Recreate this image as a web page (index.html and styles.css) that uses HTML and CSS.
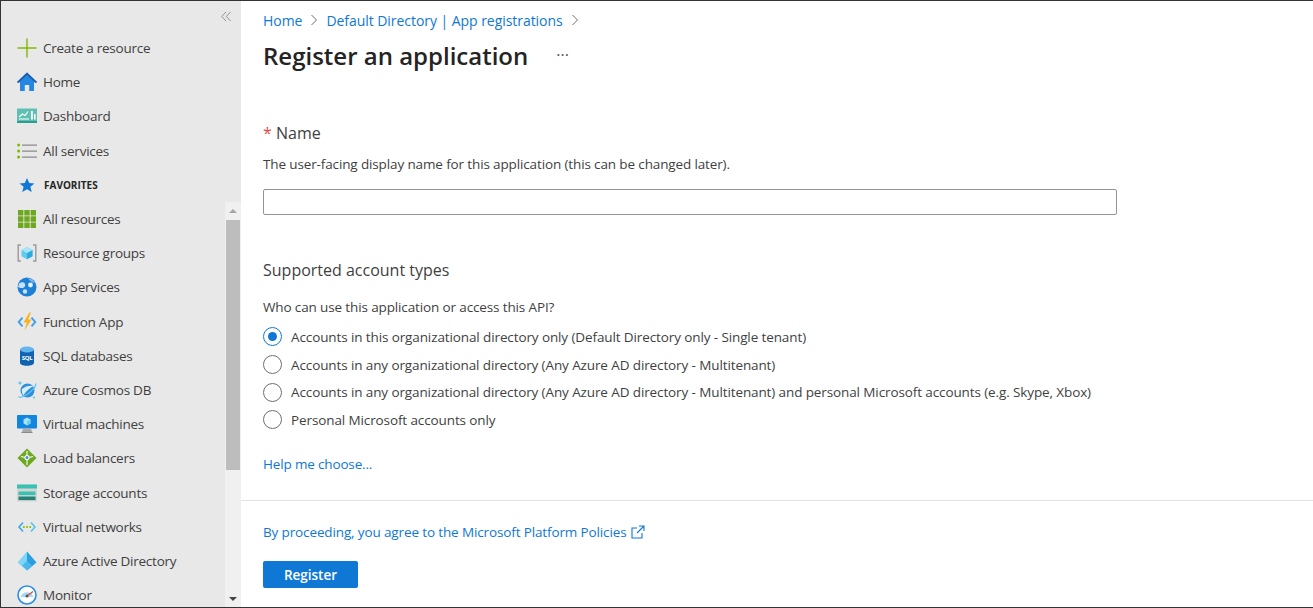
FILE: index.html
```html
<!DOCTYPE html>
<html lang="en">
<head>
<meta charset="UTF-8" />
<meta name="viewport" content="width=device-width, initial-scale=1" />
<title>Register an application</title>
<link rel="stylesheet" href="styles.css">
</head>
<body>
<div class="window">

  <!-- Sidebar -->
  <aside class="sidebar">
    <div class="collapse">
      <svg width="11" height="11" viewBox="0 0 12 12" fill="none" stroke="#8a8a8a" stroke-width="1"><path d="M5.5 1 L0.8 6 L5.5 11 M10.5 1 L5.8 6 L10.5 11"/></svg>
    </div>

    <a class="nav-item">
      <svg class="icon" viewBox="0 0 20 20" fill="none"><path d="M10 0.5V19.5M0.5 10H19.5" stroke="#7fba00" stroke-width="1.4"/></svg>
      <span>Create a resource</span>
    </a>
    <a class="nav-item">
      <svg class="icon" viewBox="0 0 20 20"><path d="M10 0.5 L20 10 L18.6 11 L17 9.8 V19 H12.2 V13 H7.8 V19 H3 V9.8 L1.4 11 L0 10 Z" fill="#2487e2"/><path d="M10 0.5 L20 10 L18.6 11 L10 3 L1.4 11 L0 10 Z" fill="#1d5fa8"/></svg>
      <span>Home</span>
    </a>
    <a class="nav-item">
      <svg class="icon" viewBox="0 0 20 20"><rect y="2.5" width="20" height="14" fill="#5fbfb2"/><rect y="15" width="20" height="2" fill="#2f9c92"/><path d="M2 11 L5.5 8 L8 9.5 L11 5.5" fill="none" stroke="#fff" stroke-width="1.2"/><path d="M14 5h1.8v8.5H14zM17 8h1.6v5.5H17z" fill="#fff"/><rect x="2" y="12.5" width="10" height="1" fill="#fff"/></svg>
      <span>Dashboard</span>
    </a>
    <a class="nav-item">
      <svg class="icon" viewBox="0 0 20 20"><path d="M5 3.4h15v1.3H5zM5 9.4h15v1.3H5zM5 15.4h15v1.3H5z" fill="#8a8a8a"/><circle cx="1.6" cy="4" r="1.5" fill="#7fba00"/><circle cx="1.6" cy="10" r="1.5" fill="#7fba00"/><circle cx="1.6" cy="16" r="1.5" fill="#7fba00"/></svg>
      <span>All services</span>
    </a>
    <div class="nav-item favorites">
      <svg class="icon" viewBox="0 0 20 20"><path d="M10 3 L12.2 8 L17.4 8.4 L13.4 11.8 L14.7 17 L10 14.2 L5.3 17 L6.6 11.8 L2.6 8.4 L7.8 8 Z" fill="#0f78d4"/></svg>
      <span>FAVORITES</span>
    </div>

    <div class="scroll-area">
      <nav class="scroll-list">
        <a class="nav-item">
          <svg class="icon" viewBox="0 0 20 20" fill="#6da81e"><path d="M1 1h5.4v5.4H1zM7.3 1h5.4v5.4H7.3zM13.6 1H19v5.4h-5.4zM1 7.3h5.4v5.4H1zM7.3 7.3h5.4v5.4H7.3zM13.6 7.3H19v5.4h-5.4zM1 13.6h5.4V19H1zM7.3 13.6h5.4V19H7.3zM13.6 13.6H19V19h-5.4z"/></svg>
          <span>All resources</span>
        </a>
        <a class="nav-item">
          <svg class="icon" viewBox="0 0 20 20"><path d="M4 2H1.2V18H4" fill="none" stroke="#9a9a9a" stroke-width="1.4"/><path d="M16 2h2.8V18H16" fill="none" stroke="#9a9a9a" stroke-width="1.4"/><path d="M10 4 L15.5 7 V13.2 L10 16.2 L4.5 13.2 V7 Z" fill="#5ecbf2"/><path d="M10 10 L15.5 7 V13.2 L10 16.2 Z" fill="#2ea9dc"/><path d="M10 4 L15.5 7 L10 10 L4.5 7 Z" fill="#a6e6fa"/></svg>
          <span>Resource groups</span>
        </a>
        <a class="nav-item">
          <svg class="icon" viewBox="0 0 20 20"><circle cx="10" cy="10" r="9.5" fill="#1f7fd6"/><path d="M2.5 6 C6 4 9 6 8 9 C7 12 3 11 1 10 Z" fill="#c4e2f8"/><circle cx="13.5" cy="8" r="2.4" fill="#e8f4fc"/><circle cx="8" cy="14.5" r="2.2" fill="#c4e2f8"/><path d="M11 1 C14 1.5 17 3.5 18 6 C15.5 5.5 12.5 4 11 1 Z" fill="#7cbcec"/></svg>
          <span>App Services</span>
        </a>
        <a class="nav-item">
          <svg class="icon" viewBox="0 0 20 20"><path d="M4.8 5 L0.5 10 L4.8 15 L6.2 13.8 L3 10 L6.2 6.2 Z" fill="#3aa0e8"/><path d="M15.2 5 L19.5 10 L15.2 15 L13.8 13.8 L17 10 L13.8 6.2 Z" fill="#3aa0e8"/><path d="M12.5 0.5 L6.5 10.5 H9.8 L7.5 18.5 L14.5 7.5 H11 L14 0.5 Z" fill="#f8b21c"/></svg>
          <span>Function App</span>
        </a>
        <a class="nav-item">
          <svg class="icon" viewBox="0 0 20 20"><path d="M3 3.5 H17 V16.5 C17 18.6 14 19.8 10 19.8 C6 19.8 3 18.6 3 16.5 Z" fill="#0f63b0"/><ellipse cx="10" cy="3.5" rx="7" ry="3" fill="#63b5ee"/><text x="10" y="13.6" class="sql-text">SQL</text></svg>
          <span>SQL databases</span>
        </a>
        <a class="nav-item">
          <svg class="icon" viewBox="0 0 20 20"><circle cx="10.5" cy="10.5" r="7" fill="#2f8fdc"/><path d="M5 9 C8 6 14 5 17 6 C14 7 9 11 6.5 15.5 C5 13.5 4.5 11 5 9 Z" fill="#d7eefc"/><path d="M18.5 3.5 C20 6 14 12 9 15 C6 16.8 2.5 18 1.5 16.5" fill="none" stroke="#5ec4f2" stroke-width="1.3"/><path d="M3 0.5 L3.7 2.3 L5.5 3 L3.7 3.7 L3 5.5 L2.3 3.7 L0.5 3 L2.3 2.3 Z" fill="#5ec4f2"/><circle cx="17" cy="17.5" r="1.1" fill="#5ec4f2"/></svg>
          <span>Azure Cosmos DB</span>
        </a>
        <a class="nav-item">
          <svg class="icon" viewBox="0 0 20 20"><rect y="1" width="20" height="13.5" rx="0.8" fill="#1185e0"/><path d="M6 14.5h8l1 3.5H5z" fill="#a9a9a9"/><path d="M4.5 18h11v1h-11z" fill="#8a8a8a"/><path d="M10 3.5 L13.5 5.5 V9.5 L10 11.5 L6.5 9.5 V5.5 Z" fill="#a6e2fa"/><path d="M10 7.5 L13.5 5.5 V9.5 L10 11.5 Z" fill="#6ccdf2"/></svg>
          <span>Virtual machines</span>
        </a>
        <a class="nav-item">
          <svg class="icon" viewBox="0 0 20 20"><path d="M10 0.5 L19.5 10 L10 19.5 L0.5 10 Z" fill="#6da81e"/><path d="M10 3V17M4 8.5L10 10L16 8.5" stroke="#fff" stroke-width="1.1" fill="none"/><circle cx="10" cy="9.5" r="2.6" fill="#fff"/><circle cx="10" cy="9.5" r="1.5" fill="#3f8fdc"/></svg>
          <span>Load balancers</span>
        </a>
        <a class="nav-item">
          <svg class="icon" viewBox="0 0 20 20"><rect y="1.5" width="20" height="17" fill="#d4d4d4"/><rect y="1.5" width="20" height="4" fill="#37c2b1"/><rect x="1.5" y="8.5" width="17" height="3.6" fill="#37c2b1"/><rect x="1.5" y="13.5" width="17" height="3.6" fill="#258277"/></svg>
          <span>Storage accounts</span>
        </a>
        <a class="nav-item">
          <svg class="icon" viewBox="0 0 20 20"><path d="M5.5 5 L1 10 L5.5 15 L6.6 14 L3 10 L6.6 6 Z" fill="#32a6ea"/><path d="M14.5 5 L19 10 L14.5 15 L13.4 14 L17 10 L13.4 6 Z" fill="#4cc4f0"/><circle cx="6.8" cy="10" r="1" fill="#7fba00"/><circle cx="10" cy="10" r="1" fill="#7fba00"/><circle cx="13.2" cy="10" r="1" fill="#7fba00"/></svg>
          <span>Virtual networks</span>
        </a>
        <a class="nav-item">
          <svg class="icon" viewBox="0 0 20 20"><path d="M10 0.5 L19.5 11.5 L10 19.5 Z" fill="#2a9fe0"/><path d="M10 0.5 L0.5 11.5 L10 19.5 Z" fill="#7fd4f7"/><path d="M10 10 L15 14.5 L10 19.5 L5 14.5 Z" fill="#4bb8ec"/></svg>
          <span>Azure Active Directory</span>
        </a>
        <a class="nav-item">
          <svg class="icon" viewBox="0 0 20 20"><circle cx="10" cy="10" r="9" fill="#fff" stroke="#2a8fe0" stroke-width="1.6"/><path d="M3.5 12 A6.8 6.8 0 0 1 16.5 12 Z" fill="#a8d8f6"/><path d="M10 11 L16 6.5" stroke="#d94f3d" stroke-width="1.4"/><circle cx="10" cy="11" r="1.5" fill="#555"/></svg>
          <span>Monitor</span>
        </a>
      </nav>
      <div class="scrollbar">
        <div class="arrow arrow-top"><i class="tri tri-up"></i></div>
        <div class="thumb"></div>
        <div class="rest"></div>
        <div class="arrow"><i class="tri tri-down"></i></div>
      </div>
    </div>
  </aside>

  <!-- Main -->
  <main class="main">
    <div class="breadcrumb">
      <a>Home</a>
      <svg class="chev" viewBox="0 0 8 12" fill="none" stroke="#6e6e6e"><path d="M1.5 1 L6.5 6 L1.5 11"/></svg>
      <a>Default Directory | App registrations</a>
      <svg class="chev" viewBox="0 0 8 12" fill="none" stroke="#6e6e6e"><path d="M1.5 1 L6.5 6 L1.5 11"/></svg>
    </div>
    <div class="title-row">
      <h1>Register an application</h1>
      <span class="more">···</span>
    </div>

    <section class="form">
      <h2 class="field-label"><span class="req">*</span> Name</h2>
      <p class="hint">The user-facing display name for this application (this can be changed later).</p>
      <input class="text-input" type="text" aria-label="Name" />

      <h2 class="section-title">Supported account types</h2>
      <p class="question">Who can use this application or access this API?</p>
      <div class="radios">
        <div class="radio-row"><i class="radio checked"></i><span>Accounts in this organizational directory only (Default Directory only - Single tenant)</span></div>
        <div class="radio-row"><i class="radio"></i><span>Accounts in any organizational directory (Any Azure AD directory - Multitenant)</span></div>
        <div class="radio-row"><i class="radio"></i><span>Accounts in any organizational directory (Any Azure AD directory - Multitenant) and personal Microsoft accounts (e.g. Skype, Xbox)</span></div>
        <div class="radio-row"><i class="radio"></i><span>Personal Microsoft accounts only</span></div>
      </div>
      <a class="help">Help me choose...</a>
    </section>

    <footer class="footer">
      <div class="policy">
        <a>By proceeding, you agree to the Microsoft Platform Policies</a>
        <svg class="ext" viewBox="0 0 14 14" fill="none" stroke="#0f78d4" stroke-width="1.1"><path d="M6 3H1V13H11V8M8 1H13V6M13 1L6 8"/></svg>
      </div>
      <button class="register">Register</button>
    </footer>
  </main>

</div>
</body>
</html>
```

FILE: styles.css
```css
/* Reset & base */
html, body {
  margin: 0;
  padding: 0;
  height: 100%;
  overflow: hidden;
  font-family: 'Open Sans', 'Noto Sans', sans-serif;
  color: #323130;
  background: #fff;
}
a {
  color: #0f78d4;
}
p, h1, h2 {
  margin: 0;
  font-weight: 400;
}

.window {
  height: 608px;
  box-sizing: border-box;
  border-top: 1px solid #333;
  border-bottom: 1px solid #333;
  border-left: 1px solid #333;
  display: flex;
}

/* Sidebar */
.sidebar {
  width: 240px;
  flex: none;
  background: #e8e8e8;
  display: flex;
  flex-direction: column;
  overflow: hidden;
}
.collapse {
  height: 30px;
  flex: none;
  display: flex;
  justify-content: flex-end;
  align-items: center;
  padding-right: 9px;
}
.nav-item {
  height: 34.2px;
  flex: none;
  display: flex;
  align-items: center;
  padding-left: 16px;
  gap: 6px;
  color: #3f3f3f;
  font-size: 13.5px;
  letter-spacing: -0.25px;
  white-space: nowrap;
}
.icon {
  width: 20px;
  height: 20px;
  flex: none;
}
.favorites {
  font-size: 10px;
  font-weight: 700;
  letter-spacing: 0;
  color: #252525;
}
.favorites span {
  margin-left: 1px;
}
.sql-text {
  font-size: 6px;
  font-weight: 700;
  fill: #fff;
  text-anchor: middle;
}

/* Scroll region */
.scroll-area {
  flex: 1;
  min-height: 0;
  display: flex;
}
.scroll-list {
  flex: 1;
  min-width: 0;
  overflow: hidden;
  display: flex;
  flex-direction: column;
}
.scrollbar {
  width: 16px;
  flex: none;
  background: #f0f0f0;
  display: flex;
  flex-direction: column;
}
.arrow {
  height: 17px;
  display: flex;
  align-items: center;
  justify-content: center;
  flex: none;
}
.arrow-top {
  height: 18px;
}
.thumb {
  height: 250px;
  margin: 0 1px;
  background: #bdbdbd;
  flex: none;
}
.rest {
  flex: 1;
}
.tri {
  width: 0;
  height: 0;
  border-left: 4px solid transparent;
  border-right: 4px solid transparent;
}
.tri-up {
  border-bottom: 4px solid #a6a6a6;
}
.tri-down {
  border-top: 4px solid #444;
}

/* Main */
.main {
  flex: 1;
  min-width: 0;
  display: flex;
  flex-direction: column;
}
.breadcrumb {
  display: flex;
  align-items: center;
  gap: 8px;
  height: 20px;
  margin-top: 9px;
  padding-left: 22px;
  font-size: 14px;
  letter-spacing: -0.05px;
}
.chev {
  width: 8px;
  height: 12px;
}
.title-row {
  display: flex;
  align-items: center;
  height: 36px;
  margin-top: 7px;
  padding-left: 22px;
}
h1 {
  font-size: 24px;
  font-weight: 600;
  color: #252423;
}
.more {
  margin-left: 28px;
  font-size: 16px;
  color: #555;
}

/* Form */
.form {
  padding-left: 22px;
  display: flex;
  flex-direction: column;
  align-items: flex-start;
  height: 428px;
  box-sizing: border-box;
  padding-top: 49px;
  border-bottom: 1px solid #e3e3e3;
}
.field-label, .section-title {
  font-size: 16px;
  line-height: 22px;
  color: #3f3f3f;
}
.req {
  color: #e8473f;
}
.hint, .question {
  font-size: 13.5px;
  letter-spacing: -0.13px;
  line-height: 20px;
  color: #3f3f3f;
}
.hint {
  margin-top: 10px;
}
.text-input {
  width: 854px;
  height: 26px;
  box-sizing: border-box;
  border: 1px solid #949494;
  border-radius: 2px;
  margin-top: 15px;
  outline: none;
}
.section-title {
  margin-top: 44px;
}
.question {
  margin-top: 16px;
}
.radios {
  display: flex;
  flex-direction: column;
  margin-top: 6px;
}
.radio-row {
  height: 27.7px;
  display: flex;
  align-items: center;
  gap: 9px;
  font-size: 13.5px;
  letter-spacing: -0.11px;
  color: #3f3f3f;
}
.radio {
  width: 19px;
  height: 19px;
  box-sizing: border-box;
  border: 1px solid #6f6f6f;
  border-radius: 50%;
  display: flex;
  align-items: center;
  justify-content: center;
}
.radio.checked {
  border-color: #0f78d4;
}
.radio.checked::after {
  content: "";
  width: 9px;
  height: 9px;
  border-radius: 50%;
  background: #0f78d4;
}
.help {
  margin-top: 20px;
  font-size: 13.5px;
  letter-spacing: -0.16px;
  line-height: 20px;
}

/* Footer */
.footer {
  padding: 21px 0 0 22px;
  display: flex;
  flex-direction: column;
  align-items: flex-start;
}
.policy {
  display: flex;
  align-items: center;
  gap: 5px;
  font-size: 13.5px;
  letter-spacing: -0.13px;
  line-height: 20px;
}
.ext {
  width: 14px;
  height: 14px;
}
.register {
  margin-top: 19px;
  width: 95px;
  height: 27px;
  border: none;
  border-radius: 2px;
  background: #0f78d4;
  color: #fff;
  font-family: inherit;
  font-size: 13.5px;
  font-weight: 600;
}
```
